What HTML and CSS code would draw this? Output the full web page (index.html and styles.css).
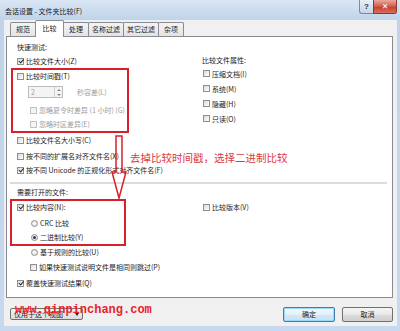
FILE: index.html
```html
<!DOCTYPE html>
<html lang="zh">
<head>
    <meta charset="UTF-8">
    <title>会话设置 - 文件夹比较</title>
    <link rel="stylesheet" href="styles.css">
</head>
<body>
    <div class="window">
        <div class="titlebar">
            <span class="title">会话设置 - 文件夹比较(F)</span>
            <div class="caption-btns">
                <span class="cap-help">?</span>
                <span class="cap-close">✕</span>
            </div>
        </div>

        <div class="client">
            <div class="tabs">
                <span class="tab">规范</span>
                <span class="tab active">比较</span>
                <span class="tab">处理</span>
                <span class="tab">名称过滤</span>
                <span class="tab">其它过滤</span>
                <span class="tab">杂项</span>
            </div>

            <div class="panel">
                <div class="section">
                    <div class="col-left">
                        <div class="row">快速测试:</div>
                        <div class="row"><i class="cb on"></i>比较文件大小(Z)</div>
                        <div class="mark-box box-time">
                            <div class="row r12"><i class="cb"></i>比较时间戳(T)</div>
                            <div class="row r12 spin-row">
                                <span class="spinner">
                                    <span class="spin-val">2</span>
                                    <span class="spin-arrows"><i class="up"></i><i class="down"></i></span>
                                </span>
                                <span class="muted">秒容差(L)</span>
                            </div>
                            <div class="row indent gap5"><i class="cb dim"></i><span class="muted">忽略夏令时差异 (1 小时) (G)</span></div>
                            <div class="row indent"><i class="cb dim"></i><span class="muted">忽略时区差异(E)</span></div>
                        </div>
                        <div class="row"><i class="cb"></i>比较文件名大小写(C)</div>
                        <div class="row gap2"><i class="cb"></i>按不同的扩展名对齐文件名(X)</div>
                        <div class="row"><i class="cb on"></i>按不同 Unicode 的正规化形式对齐文件名(F)</div>
                    </div>
                    <div class="col-right attrs">
                        <div class="row r13">比较文件属性:</div>
                        <div class="row r15"><i class="cb"></i>压缩文档(I)</div>
                        <div class="row r15"><i class="cb"></i>系统(M)</div>
                        <div class="row r15"><i class="cb"></i>隐藏(H)</div>
                        <div class="row r15"><i class="cb"></i>只读(O)</div>
                    </div>
                </div>

                <div class="separator"></div>

                <div class="section">
                    <div class="col-left">
                        <div class="row gap1">需要打开的文件:</div>
                        <div class="mark-box box-content">
                            <div class="row r12"><i class="cb on"></i>比较内容(N):</div>
                            <div class="row indent-r gap3"><i class="rb"></i>CRC 比较</div>
                            <div class="row indent-r"><i class="rb on"></i>二进制比较(Y)</div>
                        </div>
                        <div class="row r12 indent-r"><i class="rb"></i>基于规则的比较(U)</div>
                        <div class="row indent gap2"><i class="cb"></i>如果快速测试说明文件是相同则跳过(P)</div>
                        <div class="row gap2"><i class="cb on"></i>覆盖快速测试结果(Q)</div>
                    </div>
                    <div class="col-right version">
                        <div class="row"><i class="cb"></i>比较版本(V)</div>
                    </div>
                </div>
            </div>

            <div class="buttons">
                <span class="dropdown">仅用于这个视图<span class="caret"></span></span>
                <span class="btn btn-ok">确定</span>
                <span class="btn btn-cancel">取消</span>
            </div>
        </div>

        <!-- annotations drawn over the dialog -->
        <svg class="arrow" width="20" height="68" viewBox="0 0 20 68">
            <polygon points="6,2 12,2 12,38 16,38 9,64 2,38 6,38" fill="none" stroke="#d8202c" stroke-width="1.5"/>
        </svg>
        <div class="note">去掉比较时间戳，选择二进制比较</div>
        <div class="watermark">www.qinpinchang.com</div>
    </div>
</body>
</html>
```

FILE: styles.css
```css
body {
    margin: 0;
    font-family: "Noto Sans CJK SC", "Noto Sans", sans-serif;
    font-size: 7px;
    color: #1c1c1c;
}

.window {
    position: relative;
    width: 400px;
    height: 331px;
    box-sizing: border-box;
    padding: 0 3px 5px 4px;
    display: flex;
    flex-direction: column;
    background: linear-gradient(to bottom, #dae6f4 0, #bfd4ea 20px, #c6d9ee 100%);
    overflow: hidden;
}

/* title bar */
.titlebar {
    height: 20px;
    display: flex;
    align-items: flex-start;
    flex: none;
}

.title {
    margin: 6px 0 0 1px;
    line-height: 10px;
    color: #222;
}

.caption-btns {
    margin-left: auto;
    display: flex;
}

.cap-help {
    width: 14px;
    height: 14px;
    box-sizing: border-box;
    border: 1px solid #7b8aa0;
    border-top: none;
    border-right: none;
    border-radius: 0 0 0 3px;
    background: linear-gradient(#e8eff8, #c6d5e7);
    font-family: "Liberation Sans", sans-serif;
    font-weight: bold;
    font-size: 8px;
    line-height: 13px;
    text-align: center;
    color: #334;
}

.cap-close {
    width: 24px;
    height: 14px;
    box-sizing: border-box;
    border: 1px solid #8a3b31;
    border-top: none;
    border-radius: 0 0 3px 0;
    background: linear-gradient(#eaa99c, #d4574a 50%, #c43c2c 51%, #d8705e);
    color: #fff;
    font-family: "DejaVu Sans", sans-serif;
    font-weight: bold;
    font-size: 8px;
    line-height: 13px;
    text-align: center;
}

/* client area */
.client {
    flex: 1;
    display: flex;
    flex-direction: column;
    background: #f0f0f0;
    padding: 0 4px 0 2px;
}

.tabs {
    height: 16px;
    display: flex;
    align-items: flex-end;
    padding-left: 4px;
    flex: none;
}

.tab {
    height: 14px;
    box-sizing: border-box;
    min-width: 26px;
    padding: 0 3px;
    margin-right: -1px;
    border: 1px solid #898c95;
    border-bottom: none;
    border-radius: 2px 2px 0 0;
    background: linear-gradient(#f4f4f4, #e3e3e3);
    text-align: center;
    line-height: 13px;
    white-space: nowrap;
}

.tab.active {
    height: 17px;
    min-width: 29px;
    margin-bottom: -1px;
    background: #fff;
    line-height: 14px;
    position: relative;
    z-index: 1;
}

.panel {
    flex: 1;
    background: #fff;
    border: 1px solid #898c95;
    padding: 3px 10px 0;
}

.section {
    display: flex;
}

.col-left {
    width: 185px;
    flex: none;
}

.col-right .row {
    margin-left: 1px;
}

.attrs {
    padding-top: 13px;
}

.attrs .row:first-child {
    margin-left: 0;
}

.version {
    padding-top: 16px;
}

.row {
    display: flex;
    align-items: center;
    height: 14px;
    white-space: nowrap;
}

.r12 { height: 12px; }
.r13 { height: 13px; }
.r15 { height: 15px; }

.gap1 { margin-top: 1px; }
.gap2 { margin-top: 2px; }
.gap3 { margin-top: 3px; }
.gap5 { margin-top: 5px; }

.indent { padding-left: 13px; }
.indent-r { padding-left: 14px; }

.muted {
    color: #9c9c9c;
}

/* red annotation boxes */
.mark-box {
    box-sizing: border-box;
    border: 2px solid #d8202c;
}

.box-time {
    width: 118px;
    margin-left: -6px;
    padding-left: 4px;
}

.box-content {
    width: 116px;
    margin-left: -7px;
    padding-left: 5px;
}

/* checkbox and radio */
.cb,
.rb {
    width: 7px;
    height: 7px;
    box-sizing: border-box;
    border: 1px solid #8f8f8f;
    background: linear-gradient(135deg, #dadada, #fff);
    margin-right: 2px;
    position: relative;
    flex: none;
}

.cb.dim {
    border-color: #c2c2c2;
    background: #f4f4f4;
}

.cb.on::after {
    content: "";
    position: absolute;
    left: 1.5px;
    top: -0.5px;
    width: 1.5px;
    height: 3.5px;
    border: solid #1e2a3a;
    border-width: 0 1.2px 1.2px 0;
    transform: rotate(40deg);
}

.rb {
    border-radius: 50%;
    background: radial-gradient(#fff, #d8d8d8);
}

.rb.on::after {
    content: "";
    position: absolute;
    left: 1px;
    top: 1px;
    width: 3px;
    height: 3px;
    border-radius: 50%;
    background: #2b3b52;
}

/* spinner */
.spin-row {
    margin-top: 4px;
    padding-left: 11px;
}

.spinner {
    width: 35px;
    height: 12px;
    box-sizing: border-box;
    border: 1px solid #bcbcbc;
    background: #f4f4f4;
    display: flex;
    margin-right: 14px;
}

.spin-val {
    flex: 1;
    padding-left: 2px;
    line-height: 10px;
    color: #9c9c9c;
}

.spin-arrows {
    width: 7px;
    border-left: 1px solid #d0d0d0;
    display: flex;
    flex-direction: column;
    justify-content: space-around;
    align-items: center;
}

.spin-arrows .up {
    border: 2px solid transparent;
    border-top: none;
    border-bottom: 2px solid #8a8a8a;
}

.spin-arrows .down {
    border: 2px solid transparent;
    border-bottom: none;
    border-top: 2px solid #8a8a8a;
}

.separator {
    height: 2px;
    background: #dcdcdc;
    margin: 5px -5px 0 -7px;
}

/* bottom buttons */
.buttons {
    height: 28px;
    box-sizing: border-box;
    display: flex;
    align-items: flex-start;
    padding: 9px 0 0 4px;
    flex: none;
}

.dropdown {
    width: 73px;
    height: 12px;
    box-sizing: border-box;
    margin-top: 1px;
    padding: 0 3px;
    border: 1px solid #707070;
    border-radius: 2px;
    background: linear-gradient(#f4f4f4, #dcdcdc);
    display: flex;
    align-items: center;
    line-height: 10px;
    white-space: nowrap;
}

.caret {
    margin-left: auto;
    border: 2.5px solid transparent;
    border-bottom: none;
    border-top: 3px solid #222;
}

.btn {
    width: 52px;
    height: 15px;
    box-sizing: border-box;
    border: 1px solid #707070;
    border-radius: 2px;
    background: linear-gradient(#f4f4f4, #e9e9e9 50%, #dcdcdc 51%, #cfcfcf);
    text-align: center;
    line-height: 13px;
}

.btn-ok {
    margin-left: auto;
    border-color: #3c7fb1;
    box-shadow: inset 0 0 0 1px #9ed7f5;
    background: linear-gradient(#f0f8fd, #e2f1fb 50%, #d0e9f8 51%, #c4e2f6);
}

.btn-cancel {
    width: 51px;
    margin-left: 7px;
}

/* annotations */
.arrow {
    position: absolute;
    left: 110px;
    top: 134px;
}

.note {
    position: absolute;
    left: 130px;
    top: 151px;
    font-size: 10.5px;
    line-height: 14px;
    color: #e03844;
    white-space: nowrap;
}

.watermark {
    position: absolute;
    left: 15px;
    top: 303px;
    font-family: "Liberation Mono", monospace;
    font-weight: bold;
    font-size: 12px;
    line-height: 14px;
    color: #e8232b;
}
```
